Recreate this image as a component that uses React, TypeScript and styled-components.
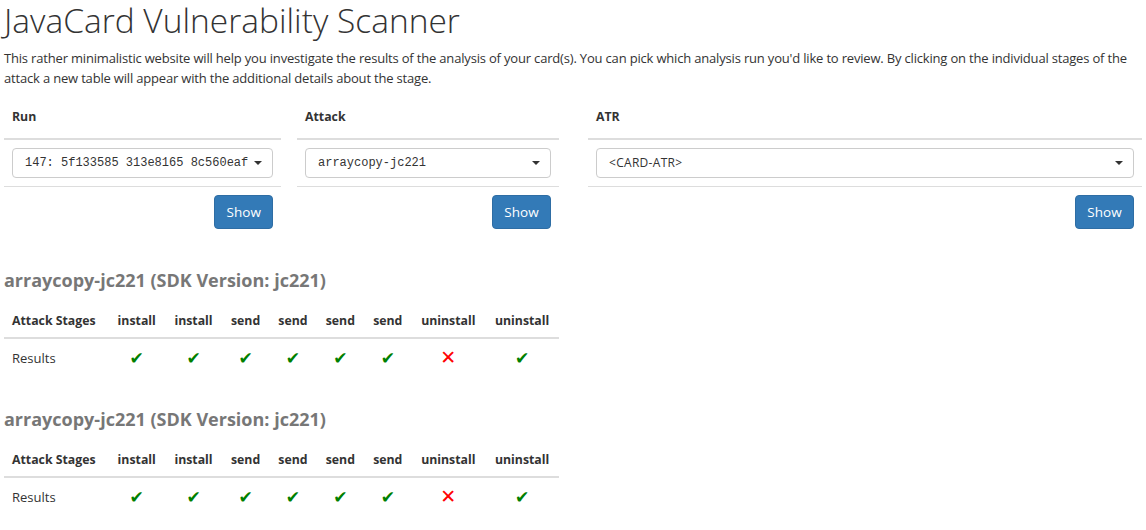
import React from "react";
import styled, { createGlobalStyle } from "styled-components";

const Global = createGlobalStyle`
  html, body { margin: 0; padding: 0; background: #fff; }
  body { font-family: "Open Sans", Roboto, sans-serif; color: #333; font-size: 13px; line-height: 20px; }
  * { box-sizing: border-box; }
`;

const Page = styled.div`
  padding: 0 4px;
`;

const Title = styled.h1`
  margin: 0;
  font-size: 33.5px;
  font-weight: 300;
  line-height: 40px;
  color: #333;
`;

const Intro = styled.p`
  margin: 8px 0 10px;
  font-size: 13px;
  letter-spacing: -0.18px;
  line-height: 20px;
`;

const Controls = styled.div`
  display: grid;
  grid-template-columns: 277px 278px 1fr;
  margin-top: 13px;
`;

const Panel = styled.table<{ $offset: number }>`
  margin-left: ${(p) => p.$offset}px;
  border-collapse: collapse;
  width: calc(100% - ${(p) => p.$offset}px);
  th {
    text-align: left;
    font-size: 12.3px;
    font-weight: 700;
    padding: 7px 8px 11px;
    line-height: 18.6px;
    border-bottom: 2px solid #ddd;
  }
  td {
    padding: 8px;
    border-top: 1px solid #ddd;
  }
  tbody tr:first-child td { border-top: none; }
`;

const Select = styled.div<{ $mono: boolean }>`
  display: flex;
  align-items: center;
  justify-content: space-between;
  height: 30px;
  padding: 0 10px 0 12px;
  border: 1px solid #ccc;
  border-radius: 4px;
  background: #fff;
  font-family: ${(p) => (p.$mono ? '"Liberation Mono", monospace' : '"Open Sans", sans-serif')};
  letter-spacing: ${(p) => (p.$mono ? "0" : "0.3px")};
  font-size: 12px;
  color: #333;
  white-space: nowrap;
  overflow: hidden;
`;

const SelectText = styled.span`
  overflow: hidden;
  flex: 1;
  min-width: 0;
`;

const Caret = styled.span`
  flex: none;
  width: 0;
  height: 0;
  margin-left: 6px;
  border-left: 4px solid transparent;
  border-right: 4px solid transparent;
  border-top: 4px solid #333;
`;

const ButtonCell = styled.div`
  display: flex;
  justify-content: flex-end;
`;

const Button = styled.button`
  height: 34px;
  width: 59px;
  padding: 0;
  background: #337ab7;
  border: 1px solid #2e6da4;
  border-radius: 4px;
  color: #fff;
  font-family: "Open Sans", sans-serif;
  font-size: 13.5px;
  cursor: pointer;
`;

const Section = styled.section<{ $gap: number }>`
  margin-top: ${(p) => p.$gap}px;
`;

const SectionTitle = styled.h3`
  margin: 0 0 12px;
  font-size: 18px;
  font-weight: 700;
  line-height: 22px;
  color: #777;
`;

const Stages = styled.table`
  width: 555px;
  border-collapse: collapse;
  th {
    font-size: 12.3px;
    font-weight: 700;
    padding: 9px 8px 7px;
    line-height: 18.6px;
    text-align: center;
    border-bottom: 2px solid #ddd;
    white-space: nowrap;
  }
  td {
    padding: 9px 8px 8px;
    line-height: 18.6px;
    font-size: 13px;
    text-align: center;
  }
  th:first-child, td:first-child { text-align: left; }
`;

const Mark = styled.span<{ $ok: boolean }>`
  color: ${(p) => (p.$ok ? "#008000" : "#ff0000")};
  font-family: "DejaVu Sans", sans-serif;
  font-size: ${(p) => (p.$ok ? "17px" : "19px")};
`;

const panels = [
  { label: "Run", value: "147: 5f133585 313e8165 8c560eaf", mono: true, offset: 0 },
  { label: "Attack", value: "arraycopy-jc221", mono: true, offset: 16 },
  { label: "ATR", value: "<CARD-ATR>", mono: false, offset: 29 },
];

const stages = ["install", "install", "send", "send", "send", "send", "uninstall", "uninstall"];
const results = [true, true, true, true, true, true, false, true];

function StageTable({ gap }: { gap: number }) {
  return (
    <Section $gap={gap}>
      <SectionTitle>arraycopy-jc221 (SDK Version: jc221)</SectionTitle>
      <Stages>
        <thead>
          <tr>
            <th>Attack Stages</th>
            {stages.map((s, i) => (
              <th key={i}>{s}</th>
            ))}
          </tr>
        </thead>
        <tbody>
          <tr>
            <td>Results</td>
            {results.map((r, i) => (
              <td key={i}>
                <Mark $ok={r}>{r ? "✔" : "✕"}</Mark>
              </td>
            ))}
          </tr>
        </tbody>
      </Stages>
    </Section>
  );
}

export default function App() {
  return (
    <Page>
      <Global />
      <Title>JavaCard Vulnerability Scanner</Title>
      <Intro>
        This rather minimalistic website will help you investigate the results of the analysis of your card(s). You can
        pick which analysis run you'd like to review. By clicking on the individual stages of the attack a new table will
        appear with the additional details about the stage.
      </Intro>
      <Controls>
        {panels.map((p) => (
          <Panel key={p.label} $offset={p.offset}>
            <thead>
              <tr>
                <th>{p.label}</th>
              </tr>
            </thead>
            <tbody>
              <tr>
                <td>
                  <Select $mono={p.mono}>
                    <SelectText>{p.value}</SelectText>
                    <Caret />
                  </Select>
                </td>
              </tr>
              <tr>
                <td>
                  <ButtonCell>
                    <Button>Show</Button>
                  </ButtonCell>
                </td>
              </tr>
            </tbody>
          </Panel>
        ))}
      </Controls>
      <StageTable gap={32} />
      <StageTable gap={31} />
    </Page>
  );
}
